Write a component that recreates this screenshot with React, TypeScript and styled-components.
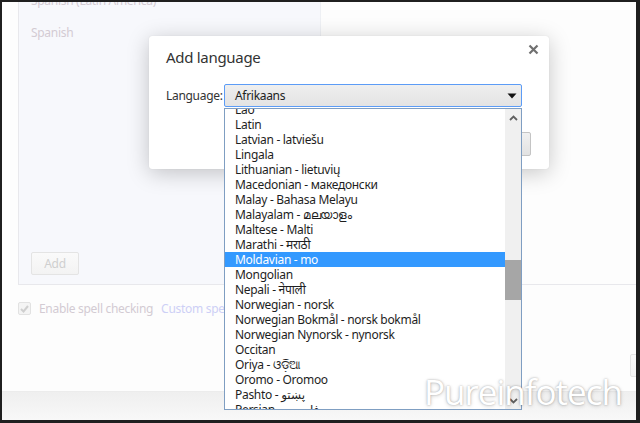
import styled, { createGlobalStyle } from "styled-components";

const GlobalStyle = createGlobalStyle`
  html, body {
    margin: 0;
    background: #222;
  }
  body {
    font-family: "Noto Sans", "Open Sans", "DejaVu Sans", sans-serif;
    letter-spacing: -0.3px;
  }
`;

const languages = [
  "Lao",
  "Latin",
  "Latvian - latviešu",
  "Lingala",
  "Lithuanian - lietuvių",
  "Macedonian - македонски",
  "Malay - Bahasa Melayu",
  "Malayalam - മലയാളം",
  "Maltese - Malti",
  "Marathi - मराठी",
  "Moldavian - mo",
  "Mongolian",
  "Nepali - नेपाली",
  "Norwegian - norsk",
  "Norwegian Bokmål - norsk bokmål",
  "Norwegian Nynorsk - nynorsk",
  "Occitan",
  "Oriya - ଓଡ଼ିଆ",
  "Oromo - Oromoo",
  "Pashto - پښتو",
  "Persian - فارسی",
];

const selected = "Moldavian - mo";

const Frame = styled.div`
  position: relative;
  width: 640px;
  height: 423px;
  box-sizing: border-box;
  border-style: solid;
  border-color: #1f1f1f;
  border-width: 2px 4px 3px 2px;
  background: #fdfdfd;
  overflow: hidden;
`;

// page behind the overlay, wider than the window
const Page = styled.div`
  width: 714px;
  height: 100%;
  box-sizing: border-box;
  padding: 0 16px;
  display: flex;
  flex-direction: column;
  font-size: 12px;
  color: #d3cbd3;
`;

const Panel = styled.div`
  margin-top: -20px;
  height: 303px;
  box-sizing: border-box;
  border: 1px solid #e8e8ec;
  display: flex;
`;

const LangColumn = styled.div`
  width: 301px;
  background: #f7f8fc;
  border-right: 1px solid #eef0f4;
  display: flex;
  flex-direction: column;
  padding-top: 2px;
`;

const LangItem = styled.div`
  height: 32px;
  line-height: 32px;
  padding-left: 12px;
`;

const GhostButton = styled.div<{ $width: number }>`
  width: ${(p) => p.$width}px;
  height: 23px;
  box-sizing: border-box;
  border: 1px solid #e4e4e4;
  border-radius: 2px;
  background: linear-gradient(#fafafa, #f3f3f3);
  color: #cfcfcf;
  font-size: 12px;
  display: flex;
  align-items: center;
  justify-content: center;
`;

const AddSlot = styled.div`
  margin: auto 0 9px 12px;
`;

const CheckRow = styled.div`
  margin-top: 17px;
  display: flex;
  align-items: center;
  gap: 8px;
  height: 13px;
`;

const CheckBox = styled.div`
  width: 13px;
  height: 13px;
  box-sizing: border-box;
  border: 1px solid #e2e2e2;
  border-radius: 2px;
  background: #f4f4f4;
  display: flex;
  align-items: center;
  justify-content: center;
`;

const LinkText = styled.span`
  margin-left: 8px;
  color: #cdd0f6;
`;

const DoneRow = styled.div`
  margin-top: 39px;
  display: flex;
  justify-content: flex-end;
`;

const Footer = styled.div`
  margin: auto -16px 0;
  height: 28px;
  border-top: 1px solid #ececec;
  background: linear-gradient(#efefef, #f8f8f8);
`;

const Watermark = styled.div`
  position: absolute;
  left: 422px;
  top: 372px;
  font-family: "Open Sans", "Noto Sans", sans-serif;
  font-size: 35px;
  line-height: 36px;
  color: #ffffff;
  letter-spacing: -1px;
  text-shadow: 0 0 2px rgba(0, 0, 0, 0.3), 0 1px 4px rgba(0, 0, 0, 0.18);
  pointer-events: none;
`;

const Dialog = styled.div`
  position: absolute;
  left: 147px;
  top: 34px;
  width: 400px;
  height: 133px;
  box-sizing: border-box;
  background: #fff;
  border-radius: 3px;
  box-shadow: 0 4px 22px rgba(0, 0, 0, 0.22), 0 0 1px rgba(0, 0, 0, 0.15);
  display: flex;
  flex-direction: column;
  padding: 11px 18px 0 17px;
  color: #333;
`;

const Title = styled.div`
  font-size: 15px;
  line-height: 20px;
  color: #333;
`;

const CloseButton = styled.div`
  position: absolute;
  right: 10px;
  top: 8px;
  width: 11px;
  height: 11px;
  display: flex;
`;

const Row = styled.div`
  margin-top: 17px;
  display: flex;
  align-items: center;
  height: 23px;
`;

const Label = styled.div`
  width: 58px;
  font-size: 12px;
  color: #333;
`;

const Select = styled.div`
  position: relative;
  width: 298px;
  height: 23px;
  box-sizing: border-box;
  border: 1px solid #5c9cf6;
  border-radius: 2px;
  background: linear-gradient(#efefef, #e3e3e3);
  display: flex;
  align-items: center;
  justify-content: space-between;
  padding: 0 4px 0 10px;
  font-size: 12px;
  color: #222;
`;

const ButtonRow = styled.div`
  margin-top: 25px;
  display: flex;
  justify-content: flex-end;
  gap: 8px;
`;

const DialogButton = styled.div`
  height: 24px;
  box-sizing: border-box;
  padding: 0 16px;
  border: 1px solid #c4c4c4;
  border-radius: 2px;
  background: linear-gradient(#f1f1f1, #e2e2e2);
  font-size: 12px;
  color: #444;
  display: flex;
  align-items: center;
`;

const ListPopup = styled.div`
  position: absolute;
  left: 75px;
  top: 72px;
  width: 298px;
  height: 302px;
  box-sizing: border-box;
  border: 1px solid #7f9ec2;
  background: #fff;
  display: flex;
`;

const Items = styled.div`
  flex: 1;
  overflow: hidden;
`;

const ItemsTrack = styled.div`
  margin-top: -7px;
`;

const Item = styled.div<{ $active?: boolean }>`
  height: 15px;
  line-height: 15px;
  padding-left: 10px;
  font-size: 12px;
  white-space: nowrap;
  color: ${(p) => (p.$active ? "#fff" : "#1e1e1e")};
  background: ${(p) => (p.$active ? "#3399ff" : "transparent")};
`;

const ScrollBar = styled.div`
  width: 16px;
  background: #f0f0f0;
  display: flex;
  flex-direction: column;
`;

const ArrowBox = styled.div`
  height: 17px;
  display: flex;
  align-items: center;
  justify-content: center;
`;

const Track = styled.div`
  flex: 1;
`;

const Thumb = styled.div<{ $offset: number }>`
  margin-top: ${(p) => p.$offset}px;
  height: 40px;
  background: #a6a6a6;
`;

const Chevron = ({ up }: { up?: boolean }) => (
  <svg width="9" height="6" viewBox="0 0 9 6">
    <path
      d={up ? "M1 5 L4.5 1.5 L8 5" : "M1 1 L4.5 4.5 L8 1"}
      fill="none"
      stroke="#606060"
      strokeWidth="1.8"
    />
  </svg>
);

export default function App() {
  return (
    <>
      <GlobalStyle />
      <Frame>
        <Page>
          <Panel>
            <LangColumn>
              <LangItem>Spanish (Latin America)</LangItem>
              <LangItem>Spanish</LangItem>
              <AddSlot>
                <GhostButton $width={48}>Add</GhostButton>
              </AddSlot>
            </LangColumn>
          </Panel>
          <CheckRow>
            <CheckBox>
              <svg width="9" height="8" viewBox="0 0 9 8">
                <path d="M1 4 L3.5 6.5 L8 1" fill="none" stroke="#cfcfcf" strokeWidth="2" />
              </svg>
            </CheckBox>
            <span>
              Enable spell checking
              <LinkText>Custom spelling dictionary</LinkText>
            </span>
          </CheckRow>
          <DoneRow>
            <GhostButton $width={70}>Done</GhostButton>
          </DoneRow>
          <Footer />
        </Page>
        <Dialog>
          <Title>Add language</Title>
          <CloseButton>
            <svg width="11" height="11" viewBox="0 0 11 11">
              <path d="M1.5 1.5 L9.5 9.5 M9.5 1.5 L1.5 9.5" stroke="#707070" strokeWidth="2.2" />
            </svg>
          </CloseButton>
          <Row>
            <Label>Language:</Label>
            <Select>
              <span>Afrikaans</span>
              <svg width="10" height="6" viewBox="0 0 10 6">
                <path d="M0.5 0.5 H9.5 L5 5.5 Z" fill="#111" />
              </svg>
            </Select>
          </Row>
          <ButtonRow>
            <DialogButton>Add</DialogButton>
            <DialogButton>Cancel</DialogButton>
          </ButtonRow>
          <ListPopup>
            <Items>
              <ItemsTrack>
                {languages.map((l) => (
                  <Item key={l} $active={l === selected}>
                    {l}
                  </Item>
                ))}
              </ItemsTrack>
            </Items>
            <ScrollBar>
              <ArrowBox>
                <Chevron up />
              </ArrowBox>
              <Track>
                <Thumb $offset={134} />
              </Track>
              <ArrowBox>
                <Chevron />
              </ArrowBox>
            </ScrollBar>
          </ListPopup>
        </Dialog>
        <Watermark>Pureinfotech</Watermark>
      </Frame>
    </>
  );
}
